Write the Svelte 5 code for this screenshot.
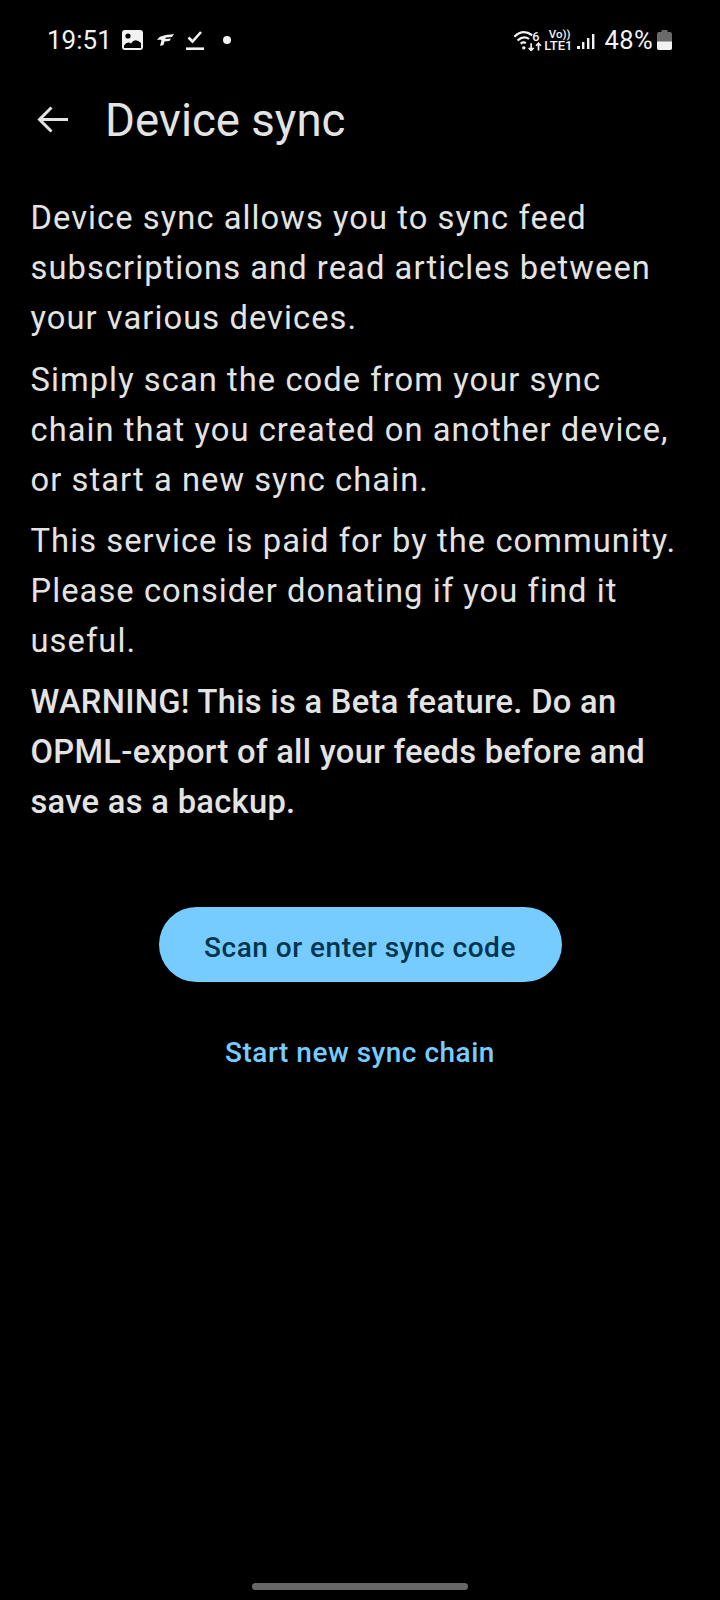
<script>
  const paragraphs = [
    'Device sync allows you to sync feed subscriptions and read articles between your various devices.',
    'Simply scan the code from your sync chain that you created on another device, or start a new sync chain.',
    'This service is paid for by the community. Please consider donating if you find it useful.'
  ];
</script>

<div class="screen">
  <div class="statusBar">
    <div class="statusLeft">
      <span class="clock">19:51</span>
      <svg class="picIcon" width="21" height="20" viewBox="0 0 21 20">
        <rect x="0" y="0" width="21" height="20" rx="3" fill="#f2f2f2" />
        <circle cx="6" cy="6" r="2.6" fill="#000" />
        <path d="M2 18 L2 15.5 Q5.5 10.5 9 13.5 Q13 7.5 19 13 L19 18 Z" fill="#000" />
      </svg>
      <svg class="fIcon" width="17" height="12" viewBox="0 0 17 12">
        <path d="M0 6 C2 2 7 1 17 0 L15 3 L9 3.5 L8.3 5 L14 4.5 L12.5 7 L7.5 7.5 L6.5 11 L3 12 L4.5 6 C3 5.5 1.5 5.5 0 6 Z" fill="#f2f2f2" />
      </svg>
      <svg class="checkIcon" width="18" height="20" viewBox="0 0 18 20">
        <path d="M2.5 7.5 L6.5 11.5 L15 2" fill="none" stroke="#f2f2f2" stroke-width="2.6" />
        <rect x="0" y="17.4" width="18" height="2.6" fill="#f2f2f2" />
      </svg>
      <span class="dot"></span>
    </div>
    <div class="statusRight">
      <svg class="wifi" width="30" height="21" viewBox="0 0 28 20">
        <path d="M1 6.5 Q9 -1.5 18 5 M4 10 Q9.5 5 15 8.5 M7 13 Q9.5 11 12 12.5" fill="none" stroke="#f2f2f2" stroke-width="2.1" />
        <circle cx="10" cy="17" r="1.6" fill="#f2f2f2" />
        <path d="M17 12.5 V19.5 M14.7 17 L17 19.5 L19.3 17 M24 19.5 V12.5 M21.7 15 L24 12.5 L26.3 15" fill="none" stroke="#f2f2f2" stroke-width="1.6" />
        <text x="18" y="10" class="tiny">6</text>
      </svg>
      <div class="volte">
        <span class="vo">Vo))</span>
        <span>LTE1</span>
      </div>
      <svg class="signal" width="18" height="15" viewBox="0 0 18 15">
        <rect x="0" y="12" width="3" height="3" fill="#f2f2f2" />
        <rect x="5" y="8" width="2.4" height="7" fill="#f2f2f2" />
        <rect x="10" y="4" width="2.4" height="11" fill="#f2f2f2" />
        <rect x="15" y="0" width="2.4" height="15" fill="#f2f2f2" />
      </svg>
      <span class="battText">48%</span>
      <svg class="batt" width="15" height="20" viewBox="0 0 15 20">
        <path d="M4.5 0 H10.5 V2 H13 Q15 2 15 4 V18 Q15 20 13 20 H2 Q0 20 0 18 V4 Q0 2 2 2 H4.5 Z" fill="#6a6a6a" />
        <path d="M0 11.5 H15 V18 Q15 20 13 20 H2 Q0 20 0 18 Z" fill="#f2f2f2" />
      </svg>
    </div>
  </div>

  <div class="topBar">
    <svg class="back" width="32" height="32" viewBox="0 0 32 32">
      <path d="M31 15.5 H3 M14.5 3.5 L2.5 15.5 L14.5 27.5" fill="none" stroke="#e3e3e3" stroke-width="3" />
    </svg>
    <h1>Device sync</h1>
  </div>

  <div class="content">
    {#each paragraphs as text}
      <p>{text}</p>
    {/each}
    <p class="warning">WARNING! This is a Beta feature. Do an OPML-export of all your feeds before and save as a backup.</p>

    <div class="actions">
      <button class="primary">Scan or enter sync code</button>
      <button class="secondary">Start new sync chain</button>
    </div>
  </div>

  <div class="homeBar"></div>
</div>

<style>
  :global(body) {
    margin: 0;
    background: #000;
  }
  .screen {
    display: flex;
    flex-direction: column;
    width: 720px;
    height: 1600px;
    background: #000;
    color: #e3e3e3;
    font-family: Roboto, sans-serif;
    overflow: hidden;
  }
  .statusBar {
    display: flex;
    justify-content: space-between;
    align-items: center;
    height: 80px;
    padding: 0 48px 0 47px;
    box-sizing: border-box;
    color: #f2f2f2;
  }
  .statusLeft, .statusRight {
    display: flex;
    align-items: center;
  }
  .clock {
    width: 75px;
    font-size: 26px;
  }
  .fIcon {
    margin-left: 14px;
  }
  .checkIcon {
    margin-left: 12px;
  }
  .dot {
    width: 8px;
    height: 8px;
    border-radius: 50%;
    background: #f2f2f2;
    margin-left: 19px;
  }
  .tiny {
    font-size: 12px;
    font-weight: 500;
    fill: #f2f2f2;
  }
  .volte {
    display: flex;
    flex-direction: column;
    align-items: flex-end;
    width: 27px;
    font-size: 13px;
    font-weight: 500;
    line-height: 12px;
    margin-left: 2px;
  }
  .vo {
    font-size: 11.5px;
    margin-right: 2px;
  }
  .signal {
    margin-left: 5px;
    margin-top: 3px;
  }
  .battText {
    font-size: 25.5px;
    margin-left: 9px;
    letter-spacing: 0.4px;
  }
  .batt {
    margin-left: 4px;
  }
  .topBar {
    display: flex;
    align-items: center;
    height: 80px;
    padding-left: 37px;
  }
  h1 {
    margin: 0 0 0 36px;
    font-size: 45.6px;
    font-weight: 400;
    color: #e3e3e3;
  }
  .content {
    flex: 1;
    padding: 33.4px 30.5px 0;
  }
  p {
    margin: 0 0 11.2px;
    font-size: 32.7px;
    line-height: 50px;
    letter-spacing: 1.06px;
  }
  .warning {
    font-weight: 500;
    letter-spacing: 0.3px;
  }
  .actions {
    display: flex;
    flex-direction: column;
    align-items: center;
    margin-top: 80px;
  }
  button {
    border: none;
    background: none;
    font-family: inherit;
    font-weight: 500;
    font-size: 28px;
    letter-spacing: 0.5px;
    padding: 0;
  }
  .primary {
    width: 403px;
    height: 75px;
    padding-top: 7px;
    border-radius: 38px;
    background: #76ccff;
    color: #00354f;
  }
  .secondary {
    margin-top: 40px;
    height: 62px;
    color: #76ccff;
  }
  .homeBar {
    width: 216px;
    height: 7px;
    border-radius: 4px;
    background: #666;
    margin: 0 auto 10px;
  }
</style>
